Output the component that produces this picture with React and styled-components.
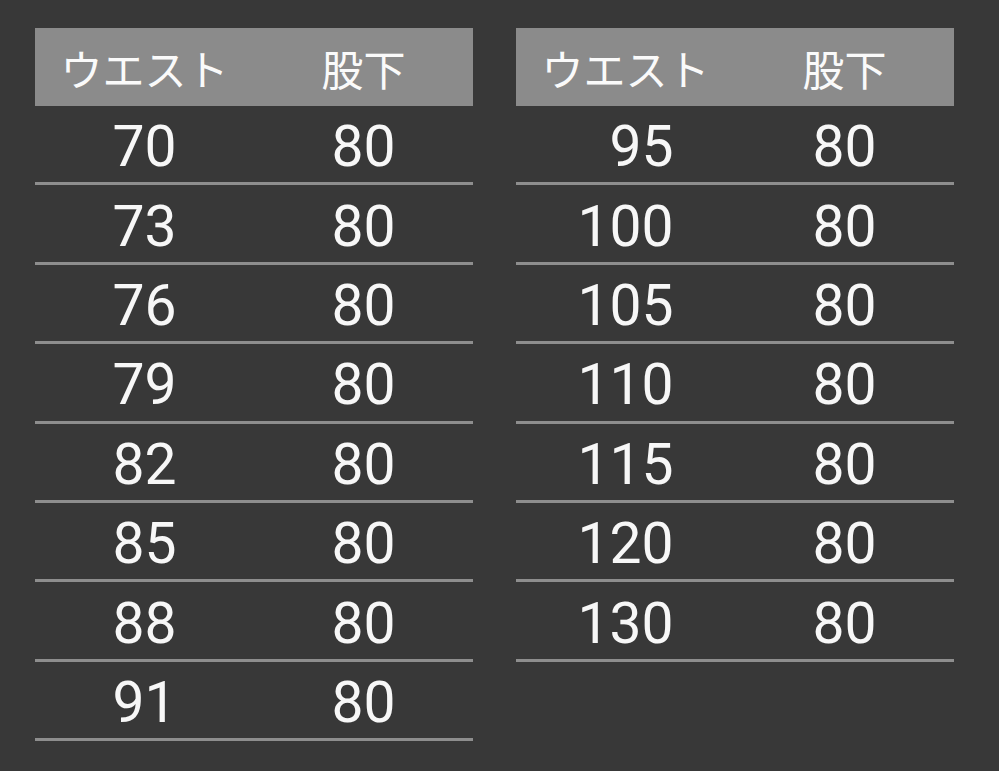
import React from 'react'
import styled, { createGlobalStyle } from 'styled-components'

const Global = createGlobalStyle`
    html, body {
        margin: 0;
        padding: 0;
        background: #383838;
    }
    body {
        width: 999px;
        height: 771px;
        overflow: hidden;
    }
`;

const Page = styled.div`
    display: flex;
    gap: 43px;
    padding: 28px 0 0 35px;
    box-sizing: border-box;
    width: 999px;
    height: 771px;
    background: #383838;
`;

const Table = styled.div`
    width: 438px;
    display: flex;
    flex-direction: column;
`;

const Head = styled.div`
    display: grid;
    grid-template-columns: 1fr 1fr;
    align-items: center;
    height: 78px;
    background: #8b8b8b;
    color: #fafafa;
    font-family: "Noto Sans CJK JP", "Noto Sans", sans-serif;
    font-size: 42px;
    span {
        text-align: center;
        line-height: 1;
        margin-top: 2px;
    }
`;

const Row = styled.div`
    display: grid;
    grid-template-columns: 1fr 1fr;
    align-items: center;
    height: 79.4px;
    box-sizing: border-box;
    border-bottom: 3px solid #8e8e8e;
    color: #f7f7f7;
    font-family: Roboto, "Liberation Sans", sans-serif;
    font-size: 57px;
    span {
        text-align: center;
        line-height: 1;
        white-space: pre;
        margin-top: 5px;
    }
`;

const left = ['70', '73', '76', '79', '82', '85', '88', '91']
const right = ['\u200795', '100', '105', '110', '115', '120', '130']

const SizeTable = ({ waists }) => (
    <Table>
        <Head>
            <span>ウエスト</span>
            <span>股下</span>
        </Head>
        {waists.map(w => (
            <Row key={w}>
                <span>{w}</span>
                <span>80</span>
            </Row>
        ))}
    </Table>
)

export default function App() {
    return (
        <>
            <Global />
            <Page>
                <SizeTable waists={left} />
                <SizeTable waists={right} />
            </Page>
        </>
    )
}
